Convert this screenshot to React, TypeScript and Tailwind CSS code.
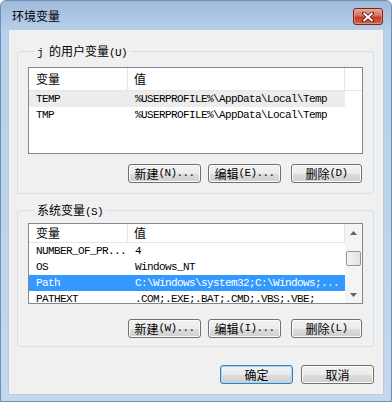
import React from "react";

const cjk = "font-['Noto_Sans_CJK_SC','Noto_Sans',sans-serif]";
const mono = "font-['Liberation_Mono',monospace] text-[11px] tracking-[-0.6px]";

function A({ children }: { children: React.ReactNode }) {
  return <span className={mono}>{children}</span>;
}

function Btn({
  children,
  w,
  primary,
}: {
  children: React.ReactNode;
  w: string;
  primary?: boolean;
}) {
  return (
    <div
      className={`${w} h-[19px] flex items-center justify-center rounded-[3px] border ${
        primary
          ? "border-[#3c7fb1] shadow-[inset_0_0_0_1px_#a6d7f5]"
          : "border-[#707070] shadow-[inset_0_0_0_1px_#fcfcfc]"
      } bg-[linear-gradient(#f2f2f2_0%,#ebebeb_50%,#dddddd_51%,#cfcfcf_100%)] text-[12px] leading-none text-black`}
    >
      {children}
    </div>
  );
}

function Header({ filler }: { filler?: boolean }) {
  return (
    <div className="flex h-[23px] bg-white border-b border-[#e5e5e5] text-[12px]">
      <div className="w-[99px] border-r border-[#e5e5e5] flex items-center pl-[7px]">变量</div>
      <div className="w-[217px] border-r border-[#e5e5e5] flex items-center pl-[6px]">值</div>
      {filler && <div className="flex-1" />}
    </div>
  );
}

function Row({
  name,
  value,
  sel,
}: {
  name: string;
  value: string;
  sel?: "gray" | "blue";
}) {
  const bg =
    sel === "blue" ? "bg-[#3399ff] text-white" : sel === "gray" ? "bg-[#ececec]" : "";
  return (
    <div className={`flex h-[16px] w-[316px] items-center shrink-0 ${bg}`}>
      <div className={`w-[100px] pl-[7px] ${mono} whitespace-nowrap overflow-hidden`}>{name}</div>
      <div className={`flex-1 pl-[6px] ${mono} whitespace-nowrap overflow-hidden`}>{value}</div>
    </div>
  );
}

function Group({
  label,
  children,
  className,
}: {
  label: React.ReactNode;
  children: React.ReactNode;
  className?: string;
}) {
  return (
    <fieldset
      className={`border border-[#d5dfe5] rounded-[3px] px-[10px] ${className ?? ""}`}
    >
      <legend className="ml-[6px] px-[3px] h-[14px] leading-[14px] text-[12px]">{label}</legend>
      {children}
    </fieldset>
  );
}

function ButtonRow({ a, b, c }: { a: React.ReactNode; b: React.ReactNode; c: React.ReactNode }) {
  return (
    <div className="flex justify-end pr-[1px]">
      <Btn w="w-[73px]">{a}</Btn>
      <div className="w-[7px]" />
      <Btn w="w-[73px]">{b}</Btn>
      <div className="w-[10px]" />
      <Btn w="w-[71px]">{c}</Btn>
    </div>
  );
}

function Arrow({ up }: { up?: boolean }) {
  return (
    <div className="h-[17px] flex items-center justify-center">
      <svg width="7" height="4" viewBox="0 0 7 4">
        <path d={up ? "M0 4 L3.5 0 L7 4 Z" : "M0 0 L3.5 4 L7 0 Z"} fill="#606060" />
      </svg>
    </div>
  );
}

export default function App() {
  return (
    <div
      className={`w-[392px] h-[402px] flex flex-col border border-[#6f8fb4] rounded-t-[6px] bg-[linear-gradient(#9fbadb_0%,#b7cfea_30px,#c3d8ee_100%)] ${cjk} text-black`}
    >
      <div className="h-[28px] flex items-start justify-between pl-[11px] pr-[8px]">
        <div className="pt-[8px] text-[12px] leading-[14px]">环境变量</div>
        <div className="mt-[7px] w-[30px] h-[17px] rounded-[3px] border border-[#6e2a20] bg-[linear-gradient(#e8a493_0%,#d8705d_45%,#c23a22_55%,#d4654b_100%)] flex items-center justify-center shadow-[inset_0_0_0_1px_#f0b8aa80]">
          <svg width="12" height="10" viewBox="0 0 12 10">
            <path
              d="M1.5 1 L10.5 9 M10.5 1 L1.5 9"
              stroke="#5a2018"
              strokeWidth="3.6"
              strokeLinecap="round"
            />
            <path d="M1.5 1 L10.5 9 M10.5 1 L1.5 9" stroke="#ffffff" strokeWidth="2" />
          </svg>
        </div>
      </div>
      <div className="mx-[7px] h-[366px] bg-[#f0f0f0] border border-[#b9cde3] flex flex-col pt-[14px] pl-[8px] pr-[9px]">
        <Group
          label={
            <>
              <A>j </A>的用户变量<A>(U)</A>
            </>
          }
          className="pb-[10px]"
        >
          <div className="mt-[9px] h-[87px] bg-white border border-[#828790] flex flex-col overflow-hidden">
            <Header filler />
            <Row name="TEMP" value="%USERPROFILE%\AppData\Local\Temp" sel="gray" />
            <Row name="TMP" value="%USERPROFILE%\AppData\Local\Temp" />
          </div>
          <div className="mt-[10px]">
            <ButtonRow
              a={
                <>
                  新建<A>(N)...</A>
                </>
              }
              b={
                <>
                  编辑<A>(E)...</A>
                </>
              }
              c={
                <>
                  删除<A>(D)</A>
                </>
              }
            />
          </div>
        </Group>
        <Group
          label={
            <>
              系统变量<A>(S)</A>
            </>
          }
          className="mt-[9px] pb-[8px]"
        >
          <div className="mt-[6px] h-[81px] bg-white border border-[#828790] flex overflow-hidden">
            <div className="flex-1 flex flex-col overflow-hidden">
              <Header />
              <Row name="NUMBER_OF_PR..." value="4" />
              <Row name="OS" value="Windows_NT" />
              <Row name="Path" value="C:\Windows\system32;C:\Windows;..." sel="blue" />
              <Row name="PATHEXT" value=".COM;.EXE;.BAT;.CMD;.VBS;.VBE;" />
            </div>
            <div className="w-[17px] bg-[#f4f4f4] flex flex-col">
              <Arrow up />
              <div className="flex-1 relative">
                <div className="mt-[10px] mx-[1px] h-[15px] rounded-[2px] border border-[#979797] bg-[linear-gradient(90deg,#f3f3f3,#e3e3e3)]" />
              </div>
              <Arrow />
            </div>
          </div>
          <div className="mt-[15px]">
            <ButtonRow
              a={
                <>
                  新建<A>(W)...</A>
                </>
              }
              b={
                <>
                  编辑<A>(I)...</A>
                </>
              }
              c={
                <>
                  删除<A>(L)</A>
                </>
              }
            />
          </div>
        </Group>
        <div className="mt-[18px] flex justify-end">
          <Btn w="w-[73px]" primary>
            确定
          </Btn>
          <div className="w-[8px]" />
          <Btn w="w-[73px]">取消</Btn>
        </div>
      </div>
    </div>
  );
}
